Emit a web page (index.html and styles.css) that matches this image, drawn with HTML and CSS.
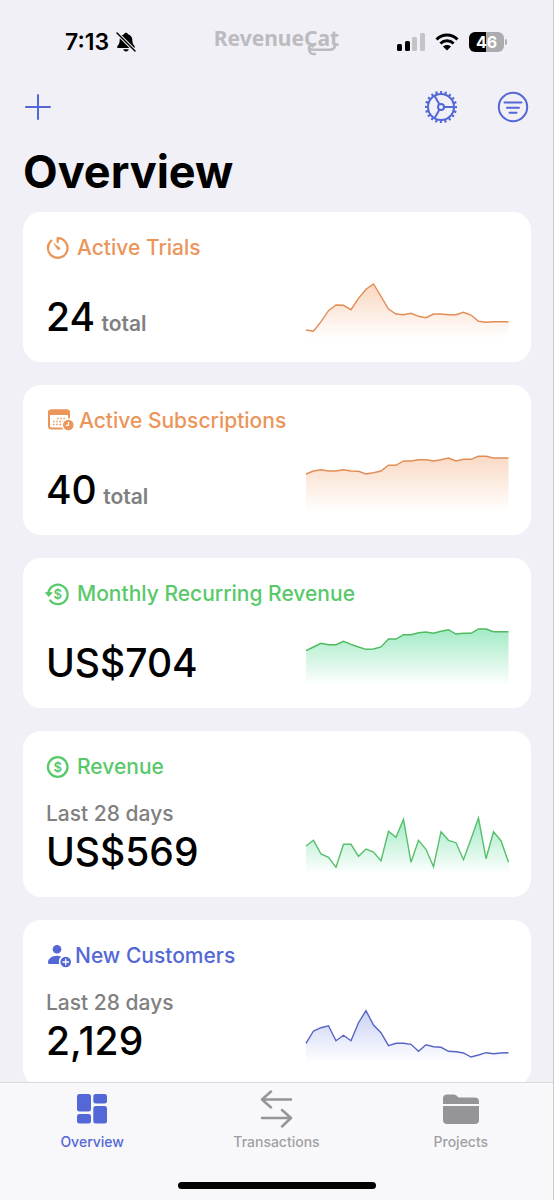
FILE: index.html
```html
<!DOCTYPE html>
<html lang="en">
<head>
    <meta charset="UTF-8">
    <meta name="viewport" content="width=device-width, initial-scale=1.0">
    <title>Overview</title>
    <link rel="stylesheet" href="styles.css">
</head>
<body>
<!-- Status bar -->
<div class="status-bar">
    <div class="status-time">
        <span>7:13</span>
        <svg width="20" height="20" viewBox="0 0 20 20">
            <path d="M10 .8c-1 0-1.700.6-1.900 1.400C5.600 3 3.700 5 3.700 7.600c0 3.600-.8 4.900-2.200 6.300-.8.8-.6 2 .6 2h15.800c1.200 0 1.400-1.200.6-2-1.400-1.400-2.200-2.700-2.200-6.300 0-2.600-1.900-4.600-4.400-5.400C11.700 1.400 11 .8 10 .8zM7.300 17.200h5.400c-.2 1.400-1.300 2.200-2.700 2.200s-2.500-.8-2.700-2.200z" fill="#000"/>
            <path d="M1 1l18 18" stroke="#f1f0f6" stroke-width="3.600"/>
            <path d="M1 1l18 18" stroke="#000" stroke-width="1.500" stroke-linecap="round"/>
        </svg>
    </div>
    <div class="brand">RevenueCat
        <svg class="brand-tail" width="32" height="12" viewBox="0 0 32 12">
            <path d="M28 0v1c0 3.500-2 4.700-6 4.700H7C4 5.700 2 5.500 2 3.800S4 1.300 6 2.300M2 4c0 4 1.500 6 4.500 6H8" fill="none" stroke="#bbbbc0" stroke-width="2.500" stroke-linecap="round"/>
        </svg>
    </div>
    <div class="status-icons">
        <svg width="28" height="18" viewBox="0 0 28 18">
            <rect x="0" y="11" width="5" height="7" rx="1.500" fill="#000"/>
            <rect x="8" y="8" width="5" height="10" rx="1.500" fill="#000"/>
            <rect x="15" y="4" width="5" height="14" rx="1.500" fill="#c3c3c8"/>
            <rect x="23" y="0" width="5" height="18" rx="1.500" fill="#c3c3c8"/>
        </svg>
        <svg width="24" height="18" viewBox="0 0 24 18">
            <path d="M1.500 6.500C7.500 .600 16.500 .600 22.500 6.500M5.400 10.500c3.800-3.600 9.400-3.600 13.200 0" fill="none" stroke="#000" stroke-width="3"/>
            <path d="M12 17.500l-4-4c2.300-2 5.700-2 8 0z" fill="#000"/>
        </svg>
        <div class="battery"><span>46</span></div>
    </div>
</div>

<header class="top-bar">
    <button type="button" class="icon-button" aria-label="Add">
        <svg width="32" height="32" viewBox="0 0 32 32">
            <path d="M16 4v24M4 16h24" fill="none" stroke="currentColor" stroke-width="2" stroke-linecap="round"/>
        </svg>
    </button>
    <div class="top-actions">
        <button type="button" class="icon-button" aria-label="Settings">
            <svg width="32" height="32" viewBox="0 0 32 32" fill="none" stroke="currentColor" stroke-width="2">
                <circle cx="16" cy="16" r="13"/>
                <circle cx="16" cy="16" r="14.800" pathLength="200" stroke-dasharray="4.500 5.500" stroke-dashoffset="2" stroke-width="2.600"/>
                <circle cx="16" cy="16" r="3"/>
                <path d="M19 16h10M14.500 13.400L9.500 4.700M14.500 18.600l-5 8.700"/>
            </svg>
        </button>
        <button type="button" class="icon-button" aria-label="Filter">
            <svg width="32" height="32" viewBox="0 0 32 32" fill="none" stroke="currentColor" stroke-width="2" stroke-linecap="round">
                <circle cx="16" cy="16" r="14.200"/>
                <path d="M7.500 11.500h17M10 16.700h12M12.500 21.700h7"/>
            </svg>
        </button>
    </div>
</header>

<main class="content">
    <h1>Overview</h1>

    <section class="card orange">
        <h2>
            <svg class="icon" width="24" height="24" viewBox="0 0 24 24">
                <path d="M11.700 6V2.200A9.800 9.800 0 1 1 5.300 4.600" fill="none" stroke="currentColor" stroke-width="2.300" stroke-linejoin="round" stroke-linecap="round"/>
                <path d="M7.500 7.200l6 4.300c1.300 1.200-.4 3.200-1.900 1.900z" fill="currentColor" stroke="currentColor" stroke-width=".5"/>
            </svg>
            Active Trials
        </h2>
        <div class="card-body">
            <div><span class="value">24</span> <span class="unit">total</span></div>
            <svg class="chart" id="trialsChart" viewBox="0 0 204 60"></svg>
        </div>
    </section>

    <section class="card orange">
        <h2>
            <svg class="icon" width="26" height="24" viewBox="0 0 26 24">
                <rect x="3" y="1.500" width="20" height="18" rx="2.500" fill="none" stroke="currentColor" stroke-width="2"/>
                <path d="M2 6V3.500C2 1.500 3 .5 5 .5h16c2 0 3 1 3 3V6z" fill="currentColor"/>
                <path d="M11 9.500h10M7 12.500h14M7 15.500h10" stroke="currentColor" stroke-width="1.500" stroke-dasharray="1.500 1.700"/>
                <circle cx="22.300" cy="16" r="6.700" fill="#fff"/>
                <circle cx="22.300" cy="16" r="5.300" fill="currentColor"/>
                <path d="M22.500 12.700v3.600h-2.800" fill="none" stroke="#fff" stroke-width="1.200"/>
            </svg>
            Active Subscriptions
        </h2>
        <div class="card-body">
            <div><span class="value">40</span> <span class="unit">total</span></div>
            <svg class="chart" id="subscriptionsChart" viewBox="0 0 204 60"></svg>
        </div>
    </section>

    <section class="card green">
        <h2>
            <svg class="icon" width="24" height="24" viewBox="0 0 24 24">
                <path d="M2.400 10.500A9.700 9.700 0 1 1 4.300 18.500" fill="none" stroke="currentColor" stroke-width="2.300" stroke-linecap="round"/>
                <path d="M-.5 10.700h6.500l-3.200 3.800z" fill="currentColor" stroke="currentColor" stroke-linejoin="round"/>
                <text class="coin" x="11.700" y="16.500">$</text>
            </svg>
            Monthly Recurring Revenue
        </h2>
        <div class="card-body">
            <div><span class="value">US$704</span></div>
            <svg class="chart" id="mrrChart" viewBox="0 0 204 60"></svg>
        </div>
    </section>

    <section class="card green">
        <h2>
            <svg class="icon" width="24" height="24" viewBox="0 0 24 24">
                <circle cx="11.700" cy="12" r="9.800" fill="none" stroke="currentColor" stroke-width="2.300"/>
                <text class="coin" x="11.700" y="16.500">$</text>
            </svg>
            Revenue
        </h2>
        <div class="card-body">
            <div><span class="period">Last 28 days</span><span class="value">US$569</span></div>
            <svg class="chart" id="revenueChart" viewBox="0 0 204 60"></svg>
        </div>
    </section>

    <section class="card blue">
        <h2>
            <svg class="icon" width="22" height="24" viewBox="0 0 22 24">
                <circle cx="11" cy="5.300" r="4.300" fill="currentColor"/>
                <path d="M2 18.500c0-4 4-6.800 9-6.800 1.500 0 2.800.2 4 .7-1.800 1.500-2.700 4.500-1.800 7.600H3.500c-1 0-1.500-.5-1.500-1.500z" fill="currentColor"/>
                <circle cx="19.700" cy="18" r="5.300" fill="currentColor"/>
                <path d="M19.700 14.700v6.600M16.400 18h6.600" stroke="#fff" stroke-width="1.300"/>
            </svg>
            New Customers
        </h2>
        <div class="card-body">
            <div><span class="period">Last 28 days</span><span class="value">2,129</span></div>
            <svg class="chart" id="customersChart" viewBox="0 0 204 60"></svg>
        </div>
    </section>
</main>

<!-- Bottom navigation -->
<nav class="tab-bar">
    <div class="tabs">
        <a href="#" class="tab active">
            <svg width="38" height="38" viewBox="0 0 38 38" fill="currentColor">
                <rect x="4" y="4" width="14" height="17.500" rx="2.500"/>
                <rect x="20.300" y="4" width="13.700" height="9.500" rx="2.500"/>
                <rect x="4" y="24" width="14" height="9.500" rx="2.500"/>
                <rect x="20.300" y="16" width="13.700" height="17.500" rx="2.500"/>
            </svg>
            Overview
        </a>
        <a href="#" class="tab">
            <svg width="38" height="38" viewBox="0 0 38 38" fill="none" stroke="#959597" stroke-width="2.500" stroke-linecap="round" stroke-linejoin="round">
                <path d="M34 9.500H5M14 1.500L5 9.500l9 8M5 28H34M25 20l9 8-9 8.500"/>
            </svg>
            Transactions
        </a>
        <a href="#" class="tab">
            <svg width="38" height="38" viewBox="0 0 38 38" fill="#959597">
                <path d="M1 14V8.500C1 6 2.500 4.500 5 4.500h6c2 0 3 .5 4 1.500s1.500 1.500 3 1.500h14.500c3 0 4.500 1.500 4.500 4V14z"/>
                <path d="M1 16h36v14c0 2.700-1.500 4-4 4H5c-2.500 0-4-1.300-4-4z"/>
            </svg>
            Projects
        </a>
    </div>
    <div class="home-indicator"></div>
</nav>

<script>
    // one height per day, measured down from the top of the chart
    var charts = {
        trialsChart: {
            line: "#e38d56", fill: "#f8d3ba",
            points: [51, 52.3, 42.7, 31.7, 26, 26.3, 30.7, 19.3, 10.3, 5, 17.3, 30, 35, 35.7, 34.3, 37.3, 38.7, 35, 35, 35.7, 35.7, 33.3, 36, 42.3, 43.3, 42.7, 42.7, 42.7]
        },
        subscriptionsChart: {
            line: "#e38d56", fill: "#f9d7c0",
            points: [22, 19, 17.7, 19, 19, 17.7, 19, 19.3, 22, 20.7, 19, 13.3, 13.3, 9, 9, 7.7, 7.7, 9, 7.7, 6, 9, 7.3, 7.3, 4.3, 4.3, 6, 6, 6]
        },
        mrrChart: {
            line: "#4fbb60", fill: "#9ce9c1",
            points: [25.7, 22, 18.3, 19.7, 19.7, 16.3, 19.3, 22, 24.3, 24, 22, 14, 14, 9.7, 9.7, 7.7, 7, 8.3, 6.3, 4.7, 9, 8.3, 8.3, 4, 4, 6.7, 6.7, 6.7]
        },
        revenueChart: {
            line: "#55c06c", fill: "#9ce9c1",
            points: [32, 26.3, 40, 43.3, 53.3, 30.3, 30.3, 42.3, 35, 38, 46.7, 17.3, 23.3, 5.3, 48.3, 26.3, 35.3, 52.7, 17.7, 26.3, 28.7, 45.7, 25, 4, 44.7, 17.7, 26.7, 48.3]
        },
        customersChart: {
            line: "#5864c4", fill: "#c3cbf2",
            points: [40.3, 28, 24.7, 22.7, 37.7, 32.3, 37.7, 19.7, 7.7, 22, 29.7, 42.7, 40.3, 40.3, 41.3, 48.3, 41.7, 43.7, 44.3, 48.3, 48.7, 50, 54, 52, 49.7, 50.7, 50, 49.7]
        }
    };

    function drawChart(id, chart) {
        var line = chart.points.map(function(y, i) {
            return (i * 7.5 + 1) + "," + y;
        }).join(" ");

        document.getElementById(id).innerHTML =
            '<linearGradient id="' + id + 'Fill" gradientUnits="userSpaceOnUse" x1="0" y1="0" x2="0" y2="60">' +
            '<stop offset="0" stop-color="' + chart.fill + '"/>' +
            '<stop offset="1" stop-color="' + chart.fill + '" stop-opacity="0"/></linearGradient>' +
            '<polygon points="1,60 ' + line + ' 203.5,60" fill="url(#' + id + 'Fill)"/>' +
            '<polyline points="' + line + '" fill="none" stroke="' + chart.line + '" stroke-width="1.4"/>';
    }

    for (var id in charts) {
        drawChart(id, charts[id]);
    }
</script>
</body>
</html>
```
FILE: styles.css
```css
* {
    box-sizing: border-box;
}

body {
    display: flex;
    flex-direction: column;
    height: 100vh;
    margin: 0;
    overflow: hidden;
    border-right: 1px solid #c9c9ce;
    background-color: #f1f0f6;
    color: #000;
    font-family: Inter, "Liberation Sans", sans-serif;
}

svg {
    display: block;
    flex-shrink: 0;
}

.status-bar {
    display: grid;
    grid-template-columns: 1fr auto 1fr;
    align-items: center;
    height: 84px;
    flex-shrink: 0;
    padding: 0 45px;
}

.status-time {
    display: flex;
    align-items: center;
    gap: 7px;
    padding-left: 20px;
    font-size: 23px;
    font-weight: 600;
}

.brand {
    position: relative;
    padding-bottom: 8px;
    color: #bbbbc0;
    font-family: "Noto Sans", sans-serif;
    font-size: 21px;
    font-weight: 700;
    line-height: 28px;
}

.brand-tail {
    position: absolute;
    right: 0;
    bottom: 4px;
}

.status-icons {
    display: flex;
    align-items: center;
    justify-content: flex-end;
    gap: 10px;
}

.battery {
    position: relative;
    width: 35px;
    height: 20px;
    margin-right: 4px;
    border-radius: 6px;
    background: linear-gradient(to right, #000 48%, #ababb0 48%);
    color: #fff;
    font-size: 16px;
    font-weight: 700;
    line-height: 20px;
    text-align: center;
}

.battery::after {
    content: "";
    position: absolute;
    top: 7px;
    right: -3px;
    width: 2px;
    height: 6px;
    border-radius: 0 2px 2px 0;
    background-color: #ababb0;
}

.top-bar {
    display: flex;
    align-items: center;
    justify-content: space-between;
    height: 46px;
    flex-shrink: 0;
    padding: 0 24px 0 22px;
}

.top-actions {
    display: flex;
    gap: 40px;
}

.icon-button {
    padding: 0;
    border: none;
    background: none;
    color: #5467d6;
    cursor: pointer;
}

.content {
    display: flex;
    flex-direction: column;
    flex: 1;
    gap: 23px;
    min-height: 0;
    overflow: hidden;
    padding: 14px 22px 0 23px;
}

h1 {
    margin: 0 0 -11px;
    font-size: 45px;
    font-weight: 700;
    line-height: 56px;
}

.card {
    display: flex;
    flex-direction: column;
    flex-shrink: 0;
    justify-content: space-between;
    gap: 19px;
    min-height: 150px;
    padding: 24px 22px 23px 23px;
    border-radius: 18px;
    background-color: #fff;
}

.card h2 {
    display: flex;
    align-items: center;
    gap: 7px;
    margin: 0;
    font-size: 21px;
    font-weight: 500;
    line-height: 24px;
}

.orange h2 {
    color: #eb955a;
}

.green h2 {
    color: #58c969;
}

.blue h2 {
    color: #5467d6;
}

.icon {
    overflow: visible;
}

.coin {
    fill: currentColor;
    font-size: 13px;
    font-weight: 600;
    text-anchor: middle;
}

.card-body {
    display: flex;
    align-items: flex-end;
    justify-content: space-between;
}

.value {
    font-size: 39px;
    font-weight: 500;
    line-height: 44px;
}

.unit {
    margin-left: 2px;
    color: #808080;
    font-size: 21px;
    font-weight: 600;
}

.period {
    display: block;
    color: #808080;
    font-size: 21px;
    font-weight: 500;
    line-height: 32px;
}

.chart {
    width: 204px;
    height: 60px;
}

.tab-bar {
    flex-shrink: 0;
    height: 118px;
    padding-top: 7px;
    border-top: 1px solid #d9d9dd;
    background-color: #f8f8fa;
}

.tabs {
    display: grid;
    grid-template-columns: repeat(3, 1fr);
}

.tab {
    display: flex;
    flex-direction: column;
    align-items: center;
    gap: 4px;
    color: #a0a0a3;
    font-size: 14px;
    font-weight: 500;
    line-height: 20px;
    text-decoration: none;
}

.tab.active {
    color: #5467d6;
}

.home-indicator {
    width: 198px;
    height: 7px;
    margin: 30px auto 0;
    border-radius: 4px;
    background-color: #000;
}
```
